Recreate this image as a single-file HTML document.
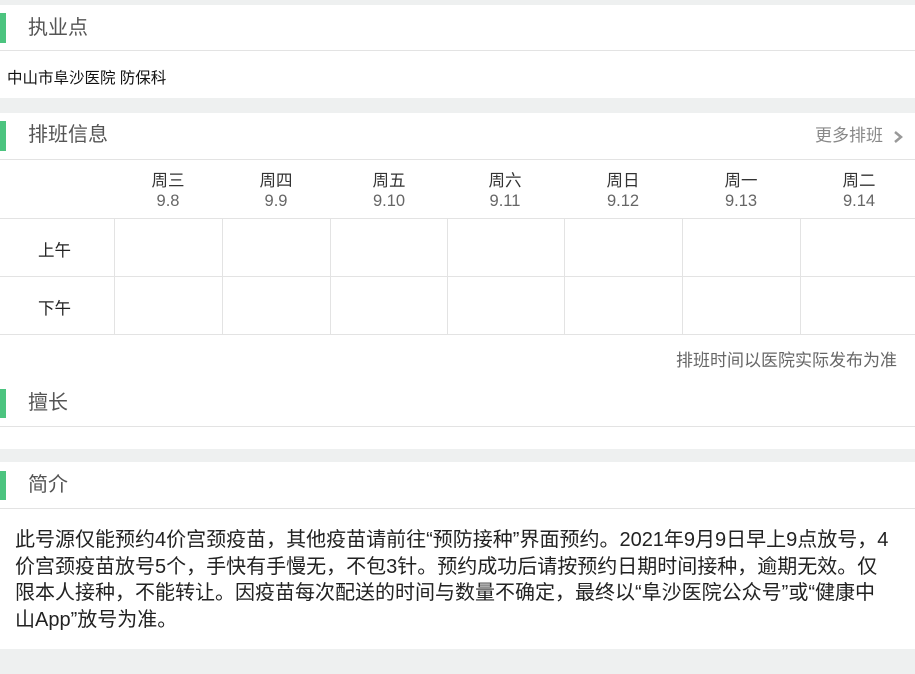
<!DOCTYPE html>
<html><head><meta charset="utf-8"><style>
*{margin:0;padding:0;box-sizing:border-box}
body{width:915px;height:674px;background:#eef0f0;font-family:"Liberation Sans","Noto Sans CJK SC",sans-serif;position:relative;overflow:hidden}
.w{position:absolute;left:0;width:915px;background:#fff}
.bar{position:absolute;left:0;width:6px;background:#4cc47f}
.t{position:absolute;left:28px;font-size:20px;color:#555;line-height:24px}
.ln{position:absolute;left:0;width:915px;height:1px;background:#e3e3e3}
.vl{position:absolute;width:1px;background:#e3e3e3;top:218px;height:116px}
.day{position:absolute;top:171px;text-align:center;font-size:16.5px;color:#333;line-height:20px;width:100px}
.day span{display:block;color:#666}
</style></head><body>
<div class="w" style="top:5px;height:93px"></div>
<div class="bar" style="top:13px;height:30px"></div>
<div class="t" style="top:16px">执业点</div>
<div class="ln" style="top:50px"></div>
<div style="position:absolute;left:7px;top:66px;font-size:15.5px;color:#111">中山市阜沙医院 防保科</div>

<div class="w" style="top:113px;height:336px"></div>
<div class="bar" style="top:121px;height:30px"></div>
<div class="t" style="top:123px">排班信息</div>
<div style="position:absolute;right:32px;top:126px;font-size:17px;line-height:20px;color:#888">更多排班</div>
<svg style="position:absolute;left:892px;top:130px" width="12" height="14"><path d="M3 2 L9 7 L3 12" stroke="#999" stroke-width="2.5" fill="none"/></svg>
<div class="ln" style="top:159px"></div>
<div class="ln" style="top:218px"></div>
<div class="ln" style="top:276px"></div>
<div class="ln" style="top:334px"></div>
<div class="vl" style="left:114px"></div><div class="vl" style="left:222px"></div><div class="vl" style="left:330px"></div><div class="vl" style="left:447px"></div><div class="vl" style="left:564px"></div><div class="vl" style="left:682px"></div><div class="vl" style="left:800px"></div>
<div class="day" style="left:118px">周三<span>9.8</span></div>
<div class="day" style="left:226px">周四<span>9.9</span></div>
<div class="day" style="left:339px">周五<span>9.10</span></div>
<div class="day" style="left:455px">周六<span>9.11</span></div>
<div class="day" style="left:573px">周日<span>9.12</span></div>
<div class="day" style="left:691px">周一<span>9.13</span></div>
<div class="day" style="left:809px">周二<span>9.14</span></div>
<div style="position:absolute;left:38px;top:237px;font-size:16.5px;color:#222">上午</div>
<div style="position:absolute;left:38px;top:295px;font-size:16.5px;color:#222">下午</div>
<div style="position:absolute;right:18px;top:346px;font-size:17px;color:#666">排班时间以医院实际发布为准</div>
<div class="bar" style="top:389px;height:29px"></div>
<div class="t" style="top:391px">擅长</div>
<div class="ln" style="top:426px"></div>

<div class="w" style="top:462px;height:187px"></div>
<div class="bar" style="top:471px;height:29px"></div>
<div class="t" style="top:473px">简介</div>
<div class="ln" style="top:508px"></div>
<div style="position:absolute;left:15px;top:527px;width:900px;white-space:nowrap;font-size:20px;line-height:26.5px;color:#222">此号源仅能预约4价宫颈疫苗，其他疫苗请前往“预防接种”界面预约。2021年9月9日早上9点放号，4<br>价宫颈疫苗放号5个，手快有手慢无，不包3针。预约成功后请按预约日期时间接种，逾期无效。仅<br>限本人接种，不能转让。因疫苗每次配送的时间与数量不确定，最终以“阜沙医院公众号”或“健康中<br>山App”放号为准。</div>
</body></html>
